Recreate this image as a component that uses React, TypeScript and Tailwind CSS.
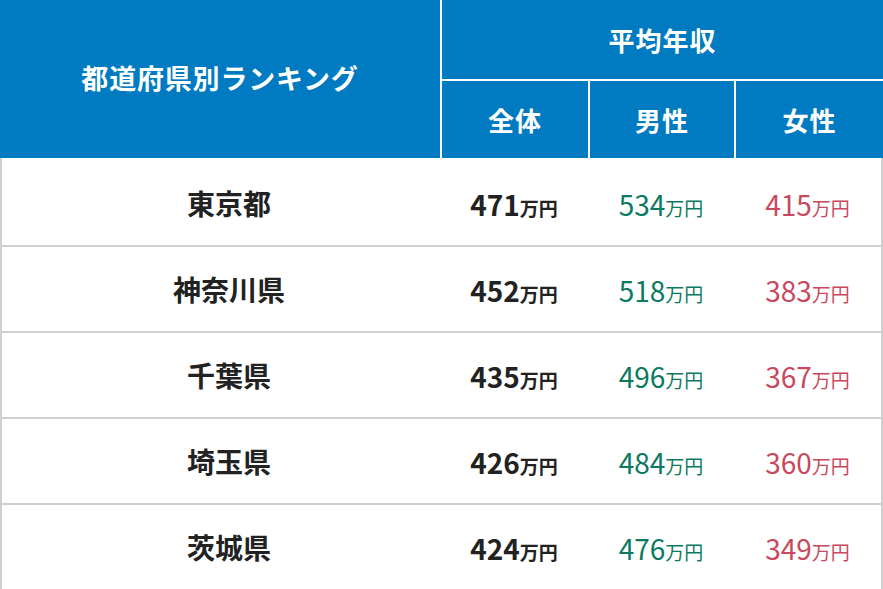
import React from "react";

const rows = [
  { name: "東京都", all: "471", m: "534", f: "415" },
  { name: "神奈川県", all: "452", m: "518", f: "383" },
  { name: "千葉県", all: "435", m: "496", f: "367" },
  { name: "埼玉県", all: "426", m: "484", f: "360" },
  { name: "茨城県", all: "424", m: "476", f: "349" },
];

const font = { fontFamily: '"Noto Sans CJK JP", "Noto Sans", sans-serif' };

export default function App() {
  return (
    <div className="w-[883px] h-[589px] bg-white overflow-hidden" style={font}>
      <div className="grid grid-cols-[440px_146px_144px_1fr] grid-rows-[79px_77px] gap-[2px] bg-white h-[158px]">
        <div className="row-span-2 bg-[#007bc1] flex items-center justify-center text-white font-bold text-[27px] tracking-[0.03em] pb-[2px]">
          都道府県別ランキング
        </div>
        <div className="col-span-3 bg-[#007bc1] flex items-center justify-center text-white font-bold text-[26px] tracking-[0.04em]">
          平均年収
        </div>
        <div className="bg-[#007bc1] flex items-center justify-center text-white font-bold text-[26px] tracking-[0.04em]">
          全体
        </div>
        <div className="bg-[#007bc1] flex items-center justify-center text-white font-bold text-[26px] tracking-[0.04em]">
          男性
        </div>
        <div className="bg-[#007bc1] flex items-center justify-center text-white font-bold text-[26px] tracking-[0.04em]">
          女性
        </div>
      </div>
      <div className="border-x-2 border-[#cfcfcf] pt-[3px]">
        {rows.map((r, i) => (
          <div
            key={r.name}
            className={
              "grid grid-cols-[438px_148px_146px_1fr] h-[84px] items-center " +
              (i > 0 ? "border-t-2 border-[#cfcfcf] box-content" : "")
            }
          >
            <div className="pl-[16px] text-center font-bold text-[28px] text-[#222222]">{r.name}</div>
            <div className="text-center font-bold text-[#222222] leading-none pt-[1px]">
              <span className="text-[28px]">{r.all}</span>
              <span className="text-[19px]">万円</span>
            </div>
            <div className="text-center text-[#0b7a60] leading-none pt-[1px]">
              <span className="text-[28px]">{r.m}</span>
              <span className="text-[19px]">万円</span>
            </div>
            <div className="text-center text-[#c9485d] leading-none pt-[1px]">
              <span className="text-[28px]">{r.f}</span>
              <span className="text-[19px]">万円</span>
            </div>
          </div>
        ))}
      </div>
    </div>
  );
}
